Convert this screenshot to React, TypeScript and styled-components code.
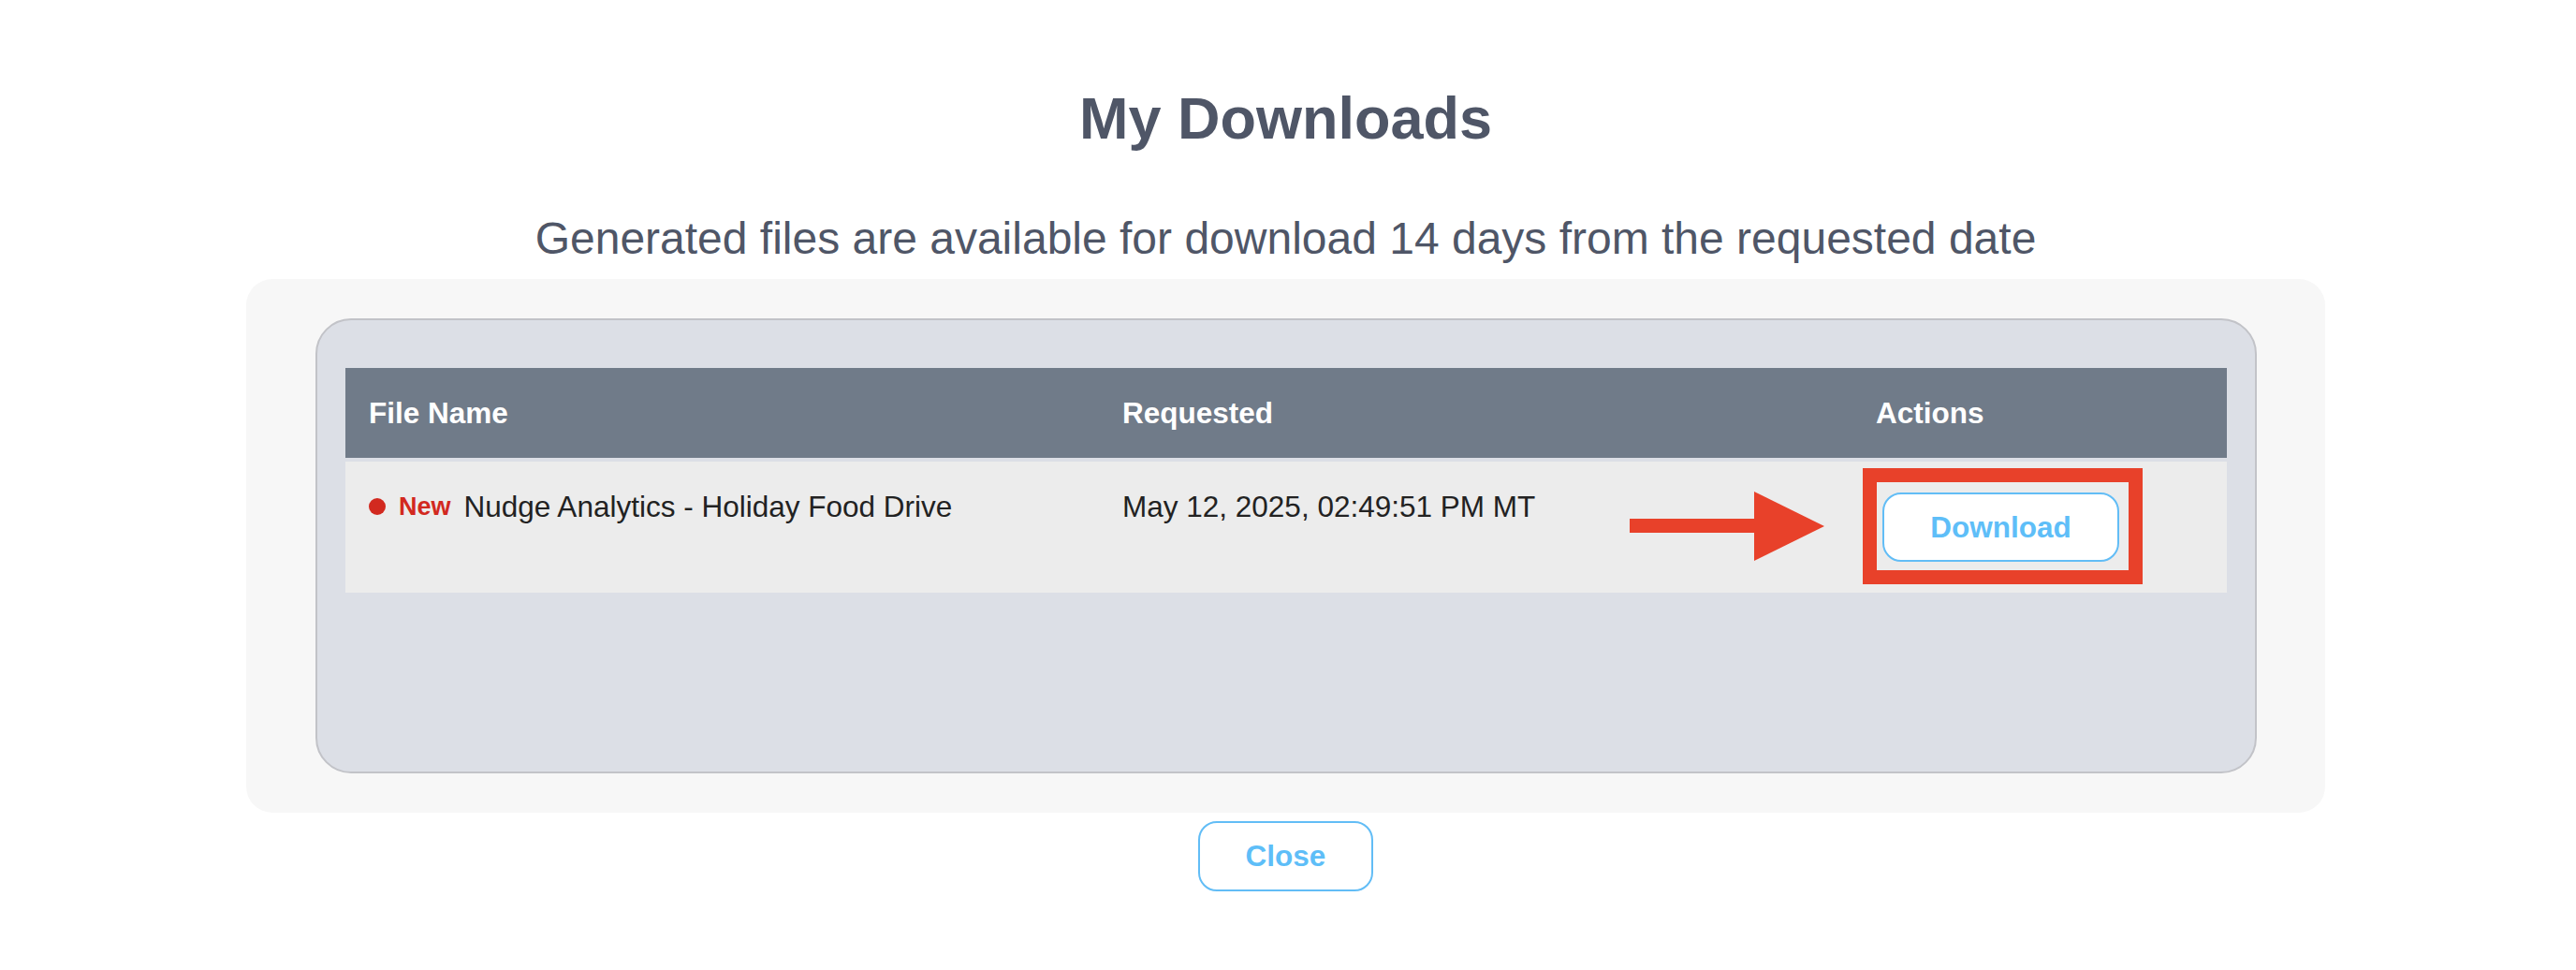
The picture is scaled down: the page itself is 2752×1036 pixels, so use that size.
import React, { FC } from 'react'
import styled, { createGlobalStyle } from 'styled-components'

const GlobalStyle = createGlobalStyle`
  body {
    margin: 0;
    background: #ffffff;
    font-family: 'Liberation Sans', Arial, sans-serif;
  }
`

const Page = styled.div`
  display: flex;
  flex-direction: column;
  align-items: center;
  padding: 90px 5px 0 0;
`

const Title = styled.h1`
  margin: 0;
  font-size: 63px;
  line-height: 72px;
  font-weight: 700;
  color: #4f5667;
`

const Subtitle = styled.p`
  margin: 65px 0 0;
  font-size: 48px;
  line-height: 56px;
  color: #4f5667;
`

const OuterPanel = styled.div`
  box-sizing: border-box;
  margin-top: 15px;
  width: 2221px;
  height: 570px;
  padding: 42px 73px 42px 74px;
  background: #f7f7f7;
  border-radius: 28px;
`

const InnerPanel = styled.div`
  box-sizing: border-box;
  height: 100%;
  padding: 51px 30px;
  background: #dcdfe6;
  border: 2px solid #c2c3c8;
  border-radius: 38px;
`

const Grid = styled.div`
  display: grid;
  grid-template-columns: 805px 805px 1fr;
`

const HeaderRow = styled(Grid)`
  height: 96px;
  align-items: center;
  background: #707b89;
`

const HeaderCell = styled.div`
  padding: 0 25px;
  font-size: 31.5px;
  font-weight: 700;
  color: #ffffff;
`

const BodyRow = styled(Grid)`
  margin-top: 4px;
  height: 140px;
  align-items: start;
  background: #ececec;
`

const TextCell = styled.div`
  display: flex;
  align-items: center;
  padding: 30px 25px 0;
  font-size: 31.5px;
  line-height: 36px;
  color: #222222;
`

const Dot = styled.span`
  width: 18px;
  height: 18px;
  border-radius: 50%;
  background: #d2291f;
  margin-right: 14px;
`

const NewTag = styled.span`
  font-size: 27px;
  font-weight: 700;
  color: #d2291f;
  margin-right: 14px;
`

const ActionCell = styled.div`
  padding: 33px 0 0 32px;
`

const ButtonWrap = styled.div`
  position: relative;
  width: 253px;
`

const OutlineButton = styled.button<{ $w: number }>`
  box-sizing: border-box;
  width: ${(p) => p.$w}px;
  height: 74px;
  background: #ffffff;
  border: 2px solid #62bdf6;
  border-radius: 20px;
  font-family: 'Liberation Sans', Arial, sans-serif;
  font-size: 31.5px;
  font-weight: 700;
  color: #5ebef8;
  cursor: pointer;
`

const Highlight = styled.div`
  position: absolute;
  left: -21px;
  top: -26px;
  width: 299px;
  height: 124px;
  box-sizing: border-box;
  border: 15px solid #e8412a;
  pointer-events: none;
`

const Arrow = styled.svg`
  position: absolute;
  left: -270px;
  top: -1px;
`

const CloseButton = styled(OutlineButton)`
  margin-top: 9px;
  height: 75px;
`

const PointerArrow: FC = () => (
  <Arrow width="208" height="74" viewBox="0 0 208 74">
    <rect x="0" y="29" width="134" height="15" fill="#e8412a" />
    <polygon points="133,0 208,37 133,74" fill="#e8412a" />
  </Arrow>
)

export default function App() {
  return (
    <>
      <GlobalStyle />
      <Page>
        <Title>My Downloads</Title>
        <Subtitle>Generated files are available for download 14 days from the requested date</Subtitle>
        <OuterPanel>
          <InnerPanel>
            <HeaderRow>
              <HeaderCell>File Name</HeaderCell>
              <HeaderCell>Requested</HeaderCell>
              <HeaderCell>Actions</HeaderCell>
            </HeaderRow>
            <BodyRow>
              <TextCell>
                <Dot />
                <NewTag>New</NewTag>
                Nudge Analytics - Holiday Food Drive
              </TextCell>
              <TextCell>May 12, 2025, 02:49:51 PM MT</TextCell>
              <ActionCell>
                <ButtonWrap>
                  <PointerArrow />
                  <Highlight />
                  <OutlineButton $w={253}>Download</OutlineButton>
                </ButtonWrap>
              </ActionCell>
            </BodyRow>
          </InnerPanel>
        </OuterPanel>
        <CloseButton $w={187}>Close</CloseButton>
      </Page>
    </>
  )
}
